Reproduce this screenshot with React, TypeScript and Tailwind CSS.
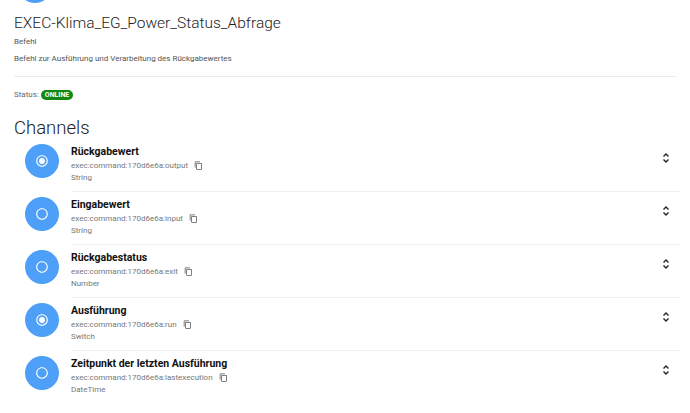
import React from "react";

const channels = [
  { name: "Rückgabewert", id: "exec:command:170d6e6a:output", type: "String", checked: true },
  { name: "Eingabewert", id: "exec:command:170d6e6a:input", type: "String", checked: false },
  { name: "Rückgabestatus", id: "exec:command:170d6e6a:exit", type: "Number", checked: false },
  { name: "Ausführung", id: "exec:command:170d6e6a:run", type: "Switch", checked: true },
  { name: "Zeitpunkt der letzten Ausführung", id: "exec:command:170d6e6a:lastexecution", type: "DateTime", checked: false },
];

function Radio({ checked }: { checked: boolean }) {
  return (
    <svg width="14" height="14" viewBox="0 0 24 24" fill="white">
      <path d="M12 2C6.48 2 2 6.48 2 12s4.48 10 10 10 10-4.48 10-10S17.52 2 12 2zm0 18c-4.42 0-8-3.58-8-8s3.58-8 8-8 8 3.58 8 8-3.58 8-8 8z" />
      {checked && <circle cx="12" cy="12" r="5" />}
    </svg>
  );
}

function CopyIcon() {
  return (
    <svg width="9" height="9" viewBox="0 0 24 24" fill="#555">
      <path d="M16 1H4c-1.1 0-2 .9-2 2v14h2V3h12V1zm3 4H8c-1.1 0-2 .9-2 2v14c0 1.1.9 2 2 2h11c1.1 0 2-.9 2-2V7c0-1.1-.9-2-2-2zm0 16H8V7h11v14z" />
    </svg>
  );
}

function Chevrons() {
  return (
    <svg width="8" height="12" viewBox="0 0 8 12" fill="none" stroke="#222" strokeWidth="1.4">
      <path d="M1.5 4.5 L4 2 L6.5 4.5" />
      <path d="M1.5 7.5 L4 10 L6.5 7.5" />
    </svg>
  );
}

export default function App() {
  return (
    <div className="w-[690px] h-[413px] overflow-hidden bg-white text-[#212121]" style={{ fontFamily: "Roboto, 'Liberation Sans', sans-serif" }}>
      <div className="px-[14px]">
        <div className="ml-[4px] -mt-[31px] w-[34px] h-[34px] rounded-full bg-[#4d9ff7]" />
        <div className="mt-[10px] text-[15.5px] font-light leading-[20px] text-[#222]">EXEC-Klima_EG_Power_Status_Abfrage</div>
        <div className="mt-[3px] text-[8px] leading-[12px] text-[#555]">Befehl</div>
        <div className="mt-[5px] text-[8px] leading-[12px] text-[#555]">Befehl zur Ausführung und Verarbeitung des Rückgabewertes</div>
        <div className="mt-[11px] h-px bg-[#ebebeb]" />
        <div className="mt-[12px] flex items-center gap-[2px] text-[8px] leading-[12px] text-[#666]">
          <span>Status:</span>
          <span className="rounded-full bg-[#128a12] px-[4px] text-[7px] leading-[10px] font-bold text-white">ONLINE</span>
        </div>
        <div className="mt-[15px] text-[18.5px] font-light leading-[24px] text-[#222]">Channels</div>
      </div>
      <div className="-mt-[1px]">
        {channels.map((c, i) => (
          <div key={i} className="flex items-start">
            <div className="ml-[25px] mt-[5px] w-[34px] h-[34px] rounded-full bg-[#4d9ff7] flex items-center justify-center shrink-0">
              <Radio checked={c.checked} />
            </div>
            <div className={`ml-[12px] flex-1 mr-[10px] flex pt-[6px] pb-[7px] ${i < channels.length - 1 ? "border-b border-[#efefef]" : ""}`}>
              <div className="flex-1">
                <div className="text-[10.5px] font-bold leading-[14px] text-[#111]">{c.name}</div>
                <div className="flex items-center gap-[6px] text-[8px] leading-[13px] text-[#777]">
                  <span>{c.id}</span>
                  <CopyIcon />
                </div>
                <div className="text-[8px] leading-[12px] text-[#777]">{c.type}</div>
              </div>
              <div className="mt-[7px] mr-[10px]">
                <Chevrons />
              </div>
            </div>
          </div>
        ))}
      </div>
    </div>
  );
}
